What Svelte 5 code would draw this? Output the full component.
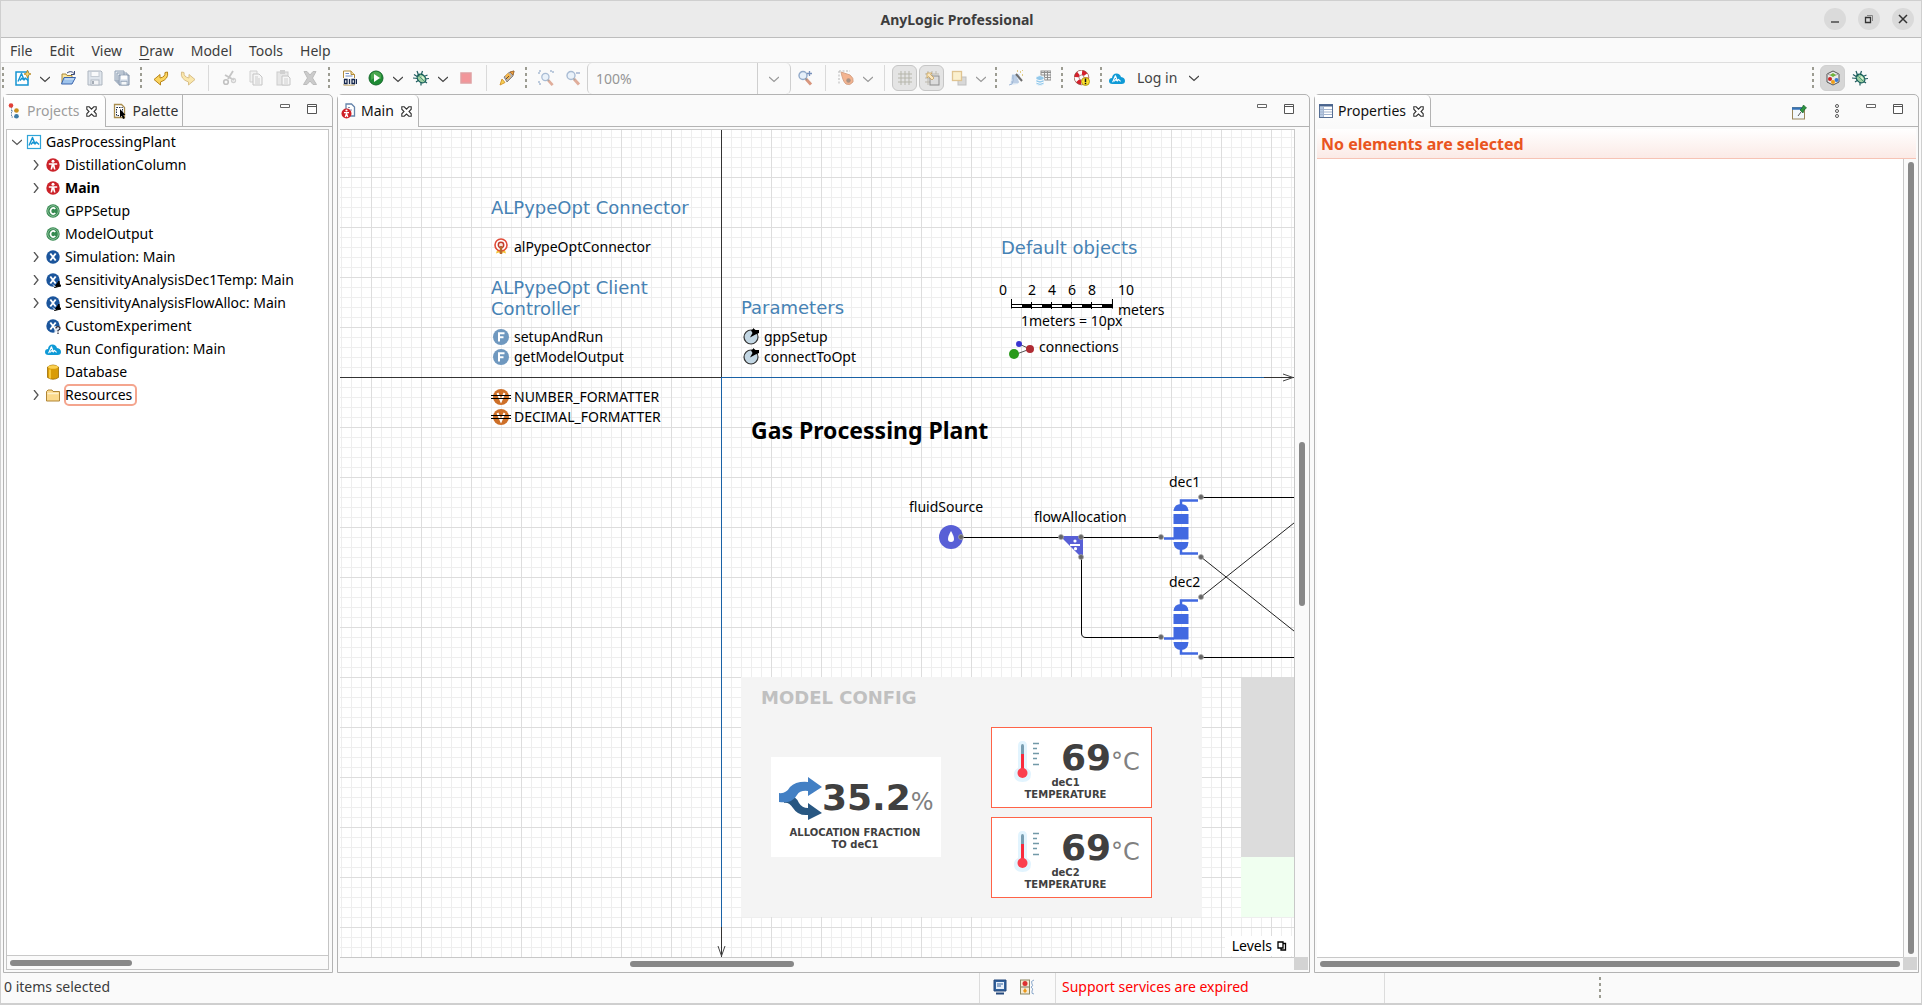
<script>
  const menus = ['File', 'Edit', 'View', 'Draw', 'Model', 'Tools', 'Help'];

  const toolbar = [
    ['dots'], ['btn', 'new', 'New'], ['drop', 'New options'], ['btn', 'open', 'Open'],
    ['btn', 'save', 'Save', 'off'], ['btn', 'saveall', 'Save all', 'soft'],
    ['dots'], ['btn', 'undo', 'Undo'], ['btn', 'redo', 'Redo', 'half'],
    ['line'], ['btn', 'cut', 'Cut', 'gray'], ['btn', 'copy', 'Copy', 'gray'],
    ['btn', 'paste', 'Paste', 'gray'], ['btn', 'delete', 'Delete', 'gray'],
    ['dots'], ['btn', 'build', 'Build model'], ['btn', 'run', 'Run'], ['drop', 'Run options'],
    ['btn', 'bug', 'Debug'], ['drop', 'Debug options'], ['btn', 'stop', 'Stop'],
    ['line'], ['btn', 'rocket', 'Export'],
    ['dots'], ['btn', 'zoomfit', 'Zoom to fit', 'half'], ['btn', 'zoomout', 'Zoom out', 'half'],
    ['combo'], ['btn', 'zoomin', 'Zoom in', 'soft'],
    ['line'], ['btn', 'pen', 'Marker', 'half'], ['drop', 'Marker options', 'off'],
    ['line'], ['btn', 'grid', 'Show grid', 'pressed'], ['btn', 'snap', 'Snap to grid', 'pressed'],
    ['btn', 'order', 'Order', 'half'], ['drop', 'Order options', 'off'],
    ['dots'], ['btn', 'wand', 'Wizard', 'soft'], ['btn', 'dbtable', 'Import database', 'soft'],
    ['dots'], ['btn', 'buoy', 'Support'], ['dots']
  ];

  const tree = [
    { level: 0, arrow: 'down', icon: 'model', text: 'GasProcessingPlant' },
    { level: 1, arrow: 'right', icon: 'agent', text: 'DistillationColumn' },
    { level: 1, arrow: 'right', icon: 'agent', text: 'Main', bold: true },
    { level: 1, icon: 'java', text: 'GPPSetup' },
    { level: 1, icon: 'java', text: 'ModelOutput' },
    { level: 1, arrow: 'right', icon: 'exp', text: 'Simulation: Main' },
    { level: 1, arrow: 'right', icon: 'exparrow', text: 'SensitivityAnalysisDec1Temp: Main' },
    { level: 1, arrow: 'right', icon: 'exparrow', text: 'SensitivityAnalysisFlowAlloc: Main' },
    { level: 1, icon: 'expq', text: 'CustomExperiment' },
    { level: 1, icon: 'cloud', text: 'Run Configuration: Main' },
    { level: 1, icon: 'database', text: 'Database' },
    { level: 1, arrow: 'right', icon: 'folder', text: 'Resources', focused: true }
  ];

  // Diagram coordinates are measured from the model's origin, where the two axes cross.
  const labels = [
    { x: -230, y: -180, kind: 'head', text: 'ALPypeOpt Connector' },
    { x: -230, y: -100, kind: 'head', text: 'ALPypeOpt Client' },
    { x: -230, y: -79, kind: 'head', text: 'Controller' },
    { x: 20, y: -80, kind: 'head', text: 'Parameters' },
    { x: 280, y: -140, kind: 'head', text: 'Default objects' },
    { x: -207, y: -140, text: 'alPypeOptConnector' },
    { x: -207, y: -50, text: 'setupAndRun' },
    { x: -207, y: -30, text: 'getModelOutput' },
    { x: -207, y: 10, text: 'NUMBER_FORMATTER' },
    { x: -207, y: 30, text: 'DECIMAL_FORMATTER' },
    { x: 43, y: -50, text: 'gppSetup' },
    { x: 43, y: -30, text: 'connectToOpt' },
    { x: 278, y: -97, text: '0' },
    { x: 307, y: -97, text: '2' },
    { x: 327, y: -97, text: '4' },
    { x: 347, y: -97, text: '6' },
    { x: 367, y: -97, text: '8' },
    { x: 397, y: -97, text: '10' },
    { x: 397, y: -77, text: 'meters' },
    { x: 300, y: -66, text: '1meters = 10px' },
    { x: 318, y: -40, text: 'connections' },
    { x: 30, y: 37, kind: 'title', text: 'Gas Processing Plant' },
    { x: 188, y: 120, text: 'fluidSource' },
    { x: 313, y: 130, text: 'flowAllocation' },
    { x: 448, y: 95, text: 'dec1' },
    { x: 448, y: 195, text: 'dec2' }
  ];
  const diagramIcons = [
    { x: -228, y: -139, icon: 'connector' },
    { x: -228, y: -48, icon: 'func' },
    { x: -228, y: -28, icon: 'func' },
    { x: -230, y: 12, icon: 'vari' },
    { x: -230, y: 32, icon: 'vari' },
    { x: 22, y: -49, icon: 'param' },
    { x: 22, y: -29, icon: 'param' }
  ];
  const ports = [[240, 160], [340, 160], [360, 160], [360, 180], [440, 160], [480, 120], [480, 180], [440, 260], [480, 220], [480, 280]];
  const sensors = [{ name: 'deC1', y: 350 }, { name: 'deC2', y: 440 }];
</script>

{#snippet chev(dir)}
  <svg class="chev" width="10" height="10" viewBox="0 0 10 10" aria-hidden="true">
    <path d={dir === 'right' ? 'M3 0 7 5 3 10' : 'M0 3 5 7.500 10 3'} fill="none" stroke="currentColor" stroke-width="1.300" />
  </svg>
{/snippet}

{#snippet logoMark(color)}
  <path d="M3 11.500 6.500 3.500 9 10 6.800 8.300 5 10.500M9 10 10.300 8 13 10.500" fill="none" stroke={color} stroke-width="1.400" stroke-linejoin="round" />
{/snippet}

{#snippet lens(sign)}
  <circle cx="6" cy="5.500" r="4" fill="#dcebfa" stroke="#5a7fb0" stroke-width="1.400" />
  <path d="M9 9 14 14.500" stroke="#c8623c" stroke-width="3" />
  <path d="M8.500 8.500 10 10" stroke="#555" stroke-width="1.500" />
  {#if sign}<path d={sign} stroke="#345a9c" stroke-width="1.300" fill="none" />{/if}
{/snippet}

{#snippet bug()}
  <path d="M4 1 5.500 5M9.500 1 8.500 4M14.500 5 11 6.500M1 4.500 5 7M0 8 5 8.500M16 8.500 12 9M14 13 11 11M8 15.500 8 12M3 12 6 10" stroke="#1e5a5e" stroke-width="1.200" />
  <ellipse cx="8.500" cy="8.500" rx="4.800" ry="3.700" transform="rotate(45 8.500 8.500)" fill="#9fd0a4" stroke="#17605a" stroke-width="1.300" />
  <path d="M4.500 4.500 7 5 5 7Z" fill="#17605a" /><path d="M6.500 6.500 11 11" stroke="#4f9a78" /><path d="M9 6.500 11 9" stroke="#e2f8d8" stroke-width="1.300" />
{/snippet}

{#snippet icon(name)}
  <svg class="icon" width="16" height="16" viewBox="0 0 16 16" aria-hidden="true">
    {#if name === 'new'}
      <rect x="1" y="2" width="12" height="13" fill="#fff" stroke="#1494d2" stroke-width="1.500" />
      {@render logoMark('#1494d2')}
      <path d="M12.500 0 13.500 3 16 4 13.500 5 12.500 8 11.500 5 9 4 11.500 3Z" fill="#f8d770" stroke="#b08420" stroke-width=".8" />
    {:else if name === 'open'}
      <path d="M2 13V4H6L7 5.500H12V7" fill="#fbe7a0" stroke="#a8883a" />
      <path d="M7 3Q11 0 14 3.500M14.500 1V4.500H11" fill="none" stroke="#3a4a78" />
      <path d="M1.500 14 4 7.500H15.500L12 14Z" fill="#9fc4ec" stroke="#3a64ac" />
      <path d="M5 9H14" stroke="#d6e8fa" />
    {:else if name === 'save'}
      <path d="M1 1H14L15 2V15H1Z" fill="#dfe5ec" stroke="#adb5bf" />
      <rect x="4" y="1.500" width="8" height="5" fill="#f9fafb" stroke="#c5ccd4" />
      <rect x="4" y="10" width="8" height="5" fill="#f3f4f6" stroke="#b2bac4" /><path d="M6 11V14" stroke="#8b94a0" stroke-width="1.500" />
    {:else if name === 'saveall'}
      <path d="M1 1H10V11H1ZM3 3H13V13H3Z" fill="#d8e0ea" stroke="#5a7290" />
      <path d="M5 5H15V15H5Z" fill="#b4c4d8" stroke="#3d5678" />
      <rect x="7" y="5.500" width="6" height="4" fill="#fff" /><rect x="7" y="11.500" width="6" height="3.500" fill="#f4f7fa" stroke="#5a7290" stroke-width=".7" />
    {:else if name === 'undo' || name === 'redo'}
      <g transform={name === 'redo' ? 'translate(16 0) scale(-1 1)' : undefined}>
        <path d="M14.500 2Q16 9 7.500 12V15L1 9.500 7 4.500V8Q12.500 7 12 2.500Z" fill="#fbd560" stroke="#b98519" stroke-linejoin="round" />
      </g>
    {:else if name === 'cut'}
      <path d="M12 1 7 9M4 5 13 10" stroke="#aaa" stroke-width="1.800" /><circle cx="5" cy="12" r="2.300" fill="none" stroke="#a4a4a4" stroke-width="1.600" /><circle cx="12.500" cy="10.500" r="2" fill="none" stroke="#bbb" stroke-width="1.300" />
    {:else if name === 'copy'}
      <path d="M2 1H9V12H2Z" fill="#eee" stroke="#bbb" /><path d="M5 4H11L14 7V15H5Z" fill="#f4f4f4" stroke="#aaa" /><path d="M7 7H10M7 9H12M7 11H12M7 13H12" stroke="#b4b4b4" />
    {:else if name === 'paste'}
      <rect x="2" y="2" width="11" height="13" fill="#ddd" stroke="#b5b5b5" /><rect x="5" y="0" width="5" height="4" fill="#bbb" /><path d="M7 6H13L15 8V15H7Z" fill="#f5f5f5" stroke="#aaa" /><path d="M9 9H13M9 11H13M9 13H13" stroke="#bbb" />
    {:else if name === 'delete'}
      <path d="M2 1.500 5 1.500 8 5 11 1.500H14L10.500 8 14.500 14.500H11L8 11 5 14.500H1.500L5.500 8Z" fill="#b3b3b3" stroke="#9c9c9c" />
    {:else if name === 'build'}
      <path d="M2.500 1H10L13.500 4.500V15H2.500Z" fill="#fff" stroke="#b08a3a" /><path d="M10 1V4.500H13.500" fill="#f2dca0" stroke="#b08a3a" />
      <path d="M4.500 3.500H8M4.500 6H11.500" stroke="#6d8ac4" /><path d="M2 8H15.500V14.500H2Z" fill="#fafafa" />
      <path d="M3.500 9.500H6V13.500H3.500ZM8.500 9V14M11 9.500H13.500V13.500H11ZM15.500 9V14" fill="none" stroke="#16284e" stroke-width="1.300" />
    {:else if name === 'run'}
      <circle cx="8" cy="8" r="7" fill="#1e8b34" stroke="#14692a" /><path d="M3 4Q8-1 13 4V9Q8 6 3 10Z" fill="#67bd62" opacity=".6" /><path d="M6 4 12 8 6 12Z" fill="#fff" />
    {:else if name === 'bug'}
      {@render bug()}
    {:else if name === 'stop'}
      <rect x="3" y="3" width="10" height="10" fill="#f2969a" stroke="#dfa0a2" stroke-width="1.500" />
    {:else if name === 'rocket'}
      <path d="M5 7 10 2.500 15 1 14 6 8 12Z" fill="#b5b1ae" stroke="#77706c" stroke-width=".8" /><path d="M11 2 15 1 14 5Z" fill="#f1a13c" stroke="#a3682a" stroke-width=".8" />
      <path d="M6 6 9 3 12 6 9 9.500Z" fill="#f7b84c" /><path d="M3 9 6 12.500 1 15Z" fill="#f8d250" stroke="#d59834" /><path d="M7 9 10 6" stroke="#6b4a28" />
    {:else if name === 'zoomfit'}
      <path d="M1 4V1H4M12 1H15V4M1 11V14H4" fill="none" stroke="#5a7fb0" stroke-width="1.500" stroke-dasharray="2 1" />
      <g transform="translate(2 2) scale(.9)">{@render lens('')}</g>
    {:else if name === 'zoomout'}
      {@render lens('M11 3H15')}
    {:else if name === 'zoomin'}
      {@render lens('M10 3.500H15M12.500 1V6')}
    {:else if name === 'pen'}
      <path d="M1 1H12M1 1V14" stroke="#777" stroke-dasharray="2 1.500" fill="none" />
      <path d="M3 2 12 5Q16 8 15 12 12 16 8 14Q5 12 3 2Z" fill="#ef7028" stroke="#b35019" /><circle cx="10.500" cy="10.500" r="2.200" fill="#5a2c10" />
    {:else if name === 'grid'}
      <path d="M4 1V15M8 1V15M12 1V15M1 4H15M1 8H15M1 12H15" stroke="#b6b6ab" />
    {:else if name === 'snap'}
      <path d="M4 1V15M8 1V15M12 1V4M1 4H15M1 8H6M1 12H6" stroke="#bdb9ae" />
      <rect x="6" y="6" width="9" height="9" fill="#dcdcdc" stroke="#8c8c8c" /><path d="M3 3H8L6.500 4.500 10 8 8 10 4.500 6.500 3 8Z" fill="#fbe6bd" stroke="#c8a25c" stroke-width=".8" />
    {:else if name === 'order'}
      <rect x="7" y="7" width="8" height="8" fill="#b8b8b8" stroke="#888" /><rect x="1.500" y="1.500" width="9" height="9" fill="#fce8a4" stroke="#c8902a" stroke-width="1.300" />
    {:else if name === 'wand'}
      <path d="M4 4H12L10 14 2 15Z" fill="#c8dcf0" /><path d="M4 6H9M4 8H9M5 10H10M3 12H11M1 15Q5 15 5 11V5" stroke="#6f94c4" fill="none" /><path d="M8 4 14 11" stroke="#222" stroke-width="2" /><path d="M9 1H10M12 2H13M14 0H15M14 5H15" stroke="#c8a010" stroke-width="1.500" />
    {:else if name === 'dbtable'}
      <rect x="6" y="1" width="10" height="9" fill="#f0f0f0" stroke="#555" /><path d="M6 2.500H16M6 5H16M6 7.500H16M9.500 1V10M12.500 1V10" stroke="#555" />
      <path d="M1 7Q5 4 9 7V14Q5 17 1 14Z" fill="#5eb0e4" stroke="#fff" stroke-width=".7" /><path d="M1 9.500Q5 12 9 9.500M1 12Q5 14.500 9 12" stroke="#fff" fill="none" />
    {:else if name === 'buoy'}
      <circle cx="7.500" cy="7.500" r="5" fill="none" stroke="#fff" stroke-width="5" /><circle cx="7.500" cy="7.500" r="5" fill="none" stroke="#d5202c" stroke-width="4.500" stroke-dasharray="4 3.850" />
      <circle cx="7.500" cy="7.500" r="7.300" fill="none" stroke="#843" stroke-width=".7" /><circle cx="7.500" cy="7.500" r="2.500" fill="#fafafa" stroke="#844" stroke-width=".6" />
      <circle cx="11.500" cy="11.500" r="4" fill="#fde22c" stroke="#a58a10" stroke-width=".8" /><path d="M11.500 8.500V12.200M11.500 13V14.300" stroke="#111" stroke-width="1.500" />
    {:else if name === 'cloud'}
      <path d="M3.500 14Q0 14 0 11 0 8 3 8 3.500 3.500 7.500 3.500 11 3.500 12 7 16 7.500 16 11 16 14 12.500 14Z" fill="#0f9ad6" /><g transform="translate(1.200 3) scale(.8)">{@render logoMark('#fff')}</g>
    {:else if name === 'persp'}
      <path d="M8 1 14 4V12L8 15 2 12V4Z" fill="#eaeaea" stroke="#555" /><path d="M2 4 8 6 14 4" stroke="#aaa" fill="none" />
      <path d="M8 3 11 5 8 7 5 5Z" fill="#6fb43c" /><circle cx="5" cy="9" r="2" fill="#c22" /><circle cx="11.500" cy="10" r="2" fill="#3c7cd4" /><circle cx="8" cy="12" r="2" fill="#f0a018" />
    {:else if name === 'projects'}
      <path d="M4.500 4V14H11M4.500 8H10" stroke="#68a" stroke-dasharray="1.500 1" fill="none" /><circle cx="4" cy="2.500" r="2.300" fill="#e23f36" /><circle cx="9.500" cy="7.500" r="2.300" fill="#c8901c" /><circle cx="9.500" cy="13.300" r="2.300" fill="#3d7ba6" />
    {:else if name === 'palette'}
      <path d="M2.500 1.500H9.500L12.500 4.500V14.500H2.500Z" fill="#fff" stroke="#a88c4c" stroke-width="1.300" /><rect x="4.500" y="4.500" width="6" height="8" fill="none" stroke="#1e2c48" stroke-dasharray="1.500 1" /><path d="M8 6V14.500L9.800 12.800 11 16 12.800 15.200 11.500 12H13.500Z" fill="#000" />
    {:else if name === 'maintab'}
      <path d="M5 1H10.500L13.500 4V13H5Z" fill="#fff" stroke="#6584ab" stroke-width="1.300" /><path d="M7 4.500H9M7 7H11" stroke="#88a" /><circle cx="5.500" cy="10.500" r="5" fill="#cf2027" /><circle cx="5.500" cy="7.500" r="1.100" fill="#fff" /><path d="M3 9.700H8M5.500 10V11.500M5.300 11 4.300 14M5.700 11 6.700 14" stroke="#fff" stroke-width="1.300" />
    {:else if name === 'props'}
      <rect x="1.500" y="1.500" width="13" height="13" fill="#fff" stroke="#576f94" /><path d="M1 2.500H15" stroke="#49648e" stroke-width="2" /><path d="M2 4H5V14H2Z" fill="#b9cbe4" /><path d="M2 6.500H14M2 9H14M2 11.500H14M5.500 4V14" stroke="#a3b4ce" />
    {:else if name === 'pin'}
      <rect x="1.500" y="3.500" width="12" height="11.500" fill="#f2f8fd" stroke="#98855a" /><path d="M1 4.500H12" stroke="#3573b8" stroke-width="2.500" /><path d="M7 12 10 8" stroke="#555" /><path d="M9 6 12 9 13 6 15.500 4 12.500 1 11 4Z" fill="#2c9440" stroke="#176428" stroke-width=".7" />
    {:else if name === 'model'}
      <rect x="1.500" y="1.500" width="13" height="13" fill="#fff" stroke="#2fa4d8" stroke-width="1.200" />{@render logoMark('#1494d2')}
    {:else if name === 'agent'}
      <circle cx="8" cy="8" r="6.700" fill="#cb2229" /><circle cx="8" cy="4.300" r="1.500" fill="#fff" /><path d="M3.800 7H12.200" stroke="#fff" stroke-width="1.500" /><path d="M6.700 7H9.300L10.500 12.500H9L8 9.500 7 12.500H5.500Z" fill="#fff" />
    {:else if name === 'java'}
      <circle cx="8" cy="8" r="6.700" fill="#358a50" /><circle cx="8" cy="8" r="5.300" fill="none" stroke="#8dbf9b" /><path d="M10.300 6Q8 3.800 6 6.200 4.800 8 6 9.800 8 12.200 10.300 10" fill="none" stroke="#fff" stroke-width="1.700" />
    {:else if name === 'exp' || name === 'exparrow' || name === 'expq'}
      <circle cx="8" cy="8" r="6.700" fill="#1b559c" /><path d="M5.300 4.500 10.700 11.500M10.700 4.500 5.300 11.500" stroke="#fff" stroke-width="1.900" />
      {#if name === 'exparrow'}<path d="M9.500 15.500 14 9 14.500 12 16 14Z" fill="#000" stroke="#000" /><path d="M8 12.500 10.500 15" stroke="#fff" />{/if}
      {#if name === 'expq'}<path d="M9.500 8H16V16H9.500Z" fill="#fff" opacity=".85" /><path d="M11 10.500Q11 8.700 13 8.700 15 8.700 15 10.500 15 11.500 13 12.500V13.600M13 14.500V16" fill="none" stroke="#223" stroke-width="1.200" />{/if}
    {:else if name === 'database'}
      <path d="M2.500 3Q8-1 13.500 3V13.500Q8 17 2.500 13.500Z" fill="#d99c08" stroke="#9c6c04" stroke-width=".8" /><ellipse cx="8" cy="3" rx="5" ry="1.800" fill="#fbd050" /><path d="M5 5.500V14.500" stroke="#f7c83c" stroke-width="2" />
    {:else if name === 'folder'}
      <path d="M1.500 14V4.500L3 3H7L8 4.500H14.500V14Z" fill="#fbd98c" stroke="#b08534" /><path d="M2.500 6.500H13.500" stroke="#fdf0cc" stroke-width="1.500" />
    {:else if name === 'monitor'}
      <path d="M2 1H14V12H2Z" fill="#30619c" stroke="#24487c" /><rect x="4" y="3" width="8" height="7" fill="#e8f0fa" /><path d="M5 5H11M5 7H9" stroke="#30619c" /><path d="M4 14.500H12" stroke="#24487c" stroke-width="2" />
    {:else if name === 'lights'}
      <rect x="1.500" y="1" width="9" height="14" fill="#f4ead2" stroke="#8c8660" /><circle cx="6" cy="4.500" r="2.500" fill="#dc3030" /><path d="M2 8H10" stroke="#776" /><path d="M6 9 8 12 6 14 4 12Z" fill="#ec9818" /><path d="M15 1Q11 2 13 5 15 7 12 8 15 10 13 12 12 15 15 15" stroke="#8aa8cc" fill="none" />
    {/if}
  </svg>
{/snippet}

{#snippet diagramIcon(name)}
  {#if name === 'func'}
    <circle cx="8" cy="8" r="8" fill="#6f98bf" /><path d="M6 12.500V4.300H11.500M6 8.200H10.500" fill="none" stroke="#fff" stroke-width="2" />
  {:else if name === 'vari'}
    <circle cx="10" cy="8" r="8" fill="#cd6f28" /><path d="M6.500 4 10 12 13.500 4" fill="none" stroke="#fff" stroke-width="2" /><path d="M0 6.500H20M0 9.500H20" stroke="#000" />
  {:else if name === 'param'}
    <ellipse cx="8" cy="9" rx="7" ry="7" fill="#c3d7e4" stroke="#333" stroke-width="1.200" /><path d="M7 9.500 9.500 5 8 2.500 10 1V0L12.500 2H16V5L12.500 6.500Z" fill="#000" />
  {:else if name === 'connector'}
    <path d="M5 9 3 15.500 6 14.500 8 16 10 14.500 13 15.500 11 9Z" fill="#f4c53a" /><circle cx="8" cy="7" r="6" fill="#fff" stroke="#e14b38" stroke-width="1.600" /><circle cx="8" cy="7" r="2.700" fill="#fbe4dc" stroke="#c23c2c" stroke-width="1.500" /><path d="M8 8V16" stroke="#b56a30" stroke-width="2.500" />
  {/if}
{/snippet}

{#snippet closeX(label)}
  <button class="close" aria-label={label}>
    <svg width="11" height="11" viewBox="0 0 11 11" aria-hidden="true">
      <path d="M.8.800H3.200L5.500 3.200 7.800.800H10.200V3.200L8 5.500 10.200 7.800V10.200H7.800L5.500 8 3.200 10.200H.8V7.800L3 5.500.8 3.200Z" fill="#fff" stroke="#333" stroke-width="1.100" />
    </svg>
  </button>
{/snippet}

{#snippet winTools()}
  <button class="mini" aria-label="Minimize view"><svg width="10" height="10" viewBox="0 0 10 10"><path d="M.5.500H9.500V3.500H.5Z" fill="#fff" stroke="#666" /></svg></button>
  <button class="mini" aria-label="Maximize view"><svg width="10" height="10" viewBox="0 0 10 10"><path d="M.5.500H9.500V9.500H.5ZM.5 2.500H9.500" fill="#fff" stroke="#555" /></svg></button>
{/snippet}

<div class="window">
  <header class="titlebar">
    <h1>AnyLogic Professional</h1>
    <div class="winbtns">
      <button aria-label="Minimize"><svg width="10" height="10" viewBox="0 0 10 10"><path d="M1 8H9" stroke="#333" stroke-width="1.300" /></svg></button>
      <button aria-label="Restore"><svg width="10" height="10" viewBox="0 0 10 10"><path d="M1.500 3.500H6.500V8.500H1.500Z" fill="none" stroke="#333" stroke-width="1.300" /><path d="M3 1.500H8.500V7" fill="none" stroke="#888" /></svg></button>
      <button aria-label="Close"><svg width="10" height="10" viewBox="0 0 10 10"><path d="M1 1 9 9M9 1 1 9" stroke="#333" stroke-width="1.500" /></svg></button>
    </div>
  </header>

  <nav class="menubar">
    {#each menus as m}
      <button>{#if m === 'Draw'}<u>D</u>raw{:else}{m}{/if}</button>
    {/each}
  </nav>

  <div class="toolbar">
    {#each toolbar as [kind, a, b, c]}
      {#if kind === 'dots'}
        <span class="dots"></span>
      {:else if kind === 'line'}
        <span class="line"></span>
      {:else if kind === 'drop'}
        <button class="drop" class:off={b === 'off'} aria-label={a}>{@render chev('down')}</button>
      {:else if kind === 'combo'}
        <div class="combo">
          <input aria-label="Zoom" value="100%" />
          <button aria-label="Zoom levels">{@render chev('down')}</button>
        </div>
      {:else}
        <button class="tool {c ?? ''}" aria-label={b}>{@render icon(a)}</button>
      {/if}
    {/each}
    <button class="login">{@render icon('cloud')}<span>Log in</span>{@render chev('down')}</button>
    <div class="perspectives">
      <span class="dots"></span>
      <button class="tool pressed dark" aria-label="AnyLogic perspective">{@render icon('persp')}</button>
      <button class="tool" aria-label="Debug perspective">{@render icon('bug')}</button>
    </div>
  </div>

  <main class="work">
    <section class="panel">
      <div class="tabs">
        <div class="tab active dim">{@render icon('projects')}<span>Projects</span>{@render closeX('Close Projects')}</div>
        <div class="tab side">{@render icon('palette')}<span>Palette</span></div>
        <div class="rest">{@render winTools()}</div>
      </div>
      <div class="treebox">
        <ul class="tree">
          {#each tree as t}
            <li class:child={t.level === 1} class:bold={t.bold}>
              <span class="twist">{#if t.arrow}{@render chev(t.arrow)}{/if}</span>
              {@render icon(t.icon)}
              <span class="name" class:focused={t.focused}>{t.text}</span>
            </li>
          {/each}
        </ul>
        <div class="hbar"><span class="thumb"></span></div>
      </div>
    </section>

    <section class="panel">
      <div class="tabs">
        <div class="tab active">{@render icon('maintab')}<span>Main</span>{@render closeX('Close Main')}</div>
        <div class="rest">{@render winTools()}</div>
      </div>
      <div class="scroller editor">
        <div class="canvas">
          <div class="axis horizontal"><span></span>
            <svg width="12" height="9" viewBox="0 0 12 9"><path d="M1 1 11 4.500 1 8" fill="none" stroke="#444" /></svg>
          </div>
          <div class="axis vertical"><span></span>
            <svg width="9" height="12" viewBox="0 0 9 12"><path d="M1 1 4.500 11 8 1" fill="none" stroke="#444" /></svg>
          </div>
          <div class="origin">
            <div class="block config"></div>
            <div class="block plot"></div>
            <div class="block legend"></div>

            <svg class="diagram" width="1" height="1">
              {#each diagramIcons as d}
                <g transform="translate({d.x} {d.y})">{@render diagramIcon(d.icon)}</g>
              {/each}

              <path d="M290.500-78V-68.500M310.500-75V-68M330.500-75V-68M350.500-75V-68M370.500-75V-68M391.500-78V-68.500" stroke="#000" />
              <rect x="290.500" y="-72.500" width="101" height="3" fill="#fff" stroke="#000" />
              <path d="M301-71H311M321-71H331M341-71H351M361-71H371M381-71H391" stroke="#000" stroke-width="4" />

              <path d="M298-33 309-28 293-22" stroke="#555" fill="none" />
              <circle cx="298" cy="-33" r="3" fill="#3a34d0" /><circle cx="309" cy="-28" r="4" fill="#b02c34" /><circle cx="293" cy="-23" r="5" fill="#2a9a1c" />

              <path d="M241 160.500H340M360 160.500H440M360.500 180V256Q360.500 260.500 365 260.500H440M480 120.500H1500M480 280.500H1500" stroke="#000" fill="none" />
              <path d="M480 180 1000 594M480 220 1000-194" stroke="#222" fill="none" />

              <circle cx="230" cy="160" r="12" fill="#585fd6" /><path d="M230 154Q233 159 233 162 233 165 230 165 227 165 227 162 227 159 230 154Z" fill="#fff" />
              <path d="M339 159H362V182Z" fill="#585fd6" /><path d="M349 168H359" stroke="#fff" stroke-width="2" /><circle cx="354" cy="164" r="1.600" fill="#fff" /><circle cx="354.500" cy="171.700" r="1.600" fill="#fff" />

              {#each [0, 100] as dy}
                <g transform="translate(0 {dy})" fill="#4169e1">
                  <path d="M460 128V123.500H477M443 161.500H453M460 172V176.500H477" fill="none" stroke="#4169e1" stroke-width="2.500" />
                  <path d="M452.500 134Q453 127 460 127 467 127 467.500 134Z" />
                  <rect x="452.500" y="137" width="15" height="10" /><rect x="452.500" y="150" width="15" height="12.500" />
                  <path d="M452.500 165H467.500Q467 173 460 173 453 173 452.500 165Z" />
                </g>
              {/each}
              {#each ports as [x, y]}
                <circle cx={x} cy={y} r="2.500" fill="#666" stroke="#aaa" stroke-width=".7" />
              {/each}
            </svg>

            {#each labels as l}
              <span class="label {l.kind ?? ''}" style="left:{l.x}px;top:{l.y}px">{l.text}</span>
            {/each}

            <h2 class="label confighead">MODEL CONFIG</h2>
            <div class="card fraction">
              <div class="value">
                <svg width="43" height="43" viewBox="0 0 43 43" aria-hidden="true">
                  <path d="M7 18Q16 17 20 26 23 31 29 31V26L43 36 29 43V38Q19 39 14 31 10 25 5 26Z" fill="#285782" />
                  <path d="M0 16Q7 17 11 10 17 4 29 5V0L43 10 29 19V14Q21 13 18 18 13 27 0 25Z" fill="#4380c4" />
                </svg>
                <strong>35.2</strong><span>%</span>
              </div>
              <p>ALLOCATION FRACTION<br />TO deC1</p>
            </div>
            {#each sensors as s}
              <div class="card sensor" style="top:{s.y}px">
                <div class="value">
                  <svg width="26" height="43" viewBox="0 0 26 43" aria-hidden="true">
                    <path d="M4 28V6Q4 1 8.500 1 13 1 13 6V28Q17 30 17 34 17 42 8.500 42 0 42 0 34 0 30 4 28Z" fill="#e2f4fe" />
                    <path d="M7 14V6Q7 4 8.500 4 10 4 10 6V14Z" fill="#789db0" /><path d="M7 14H10V30H7Z" fill="#f92a3c" /><circle cx="8.500" cy="33" r="5" fill="#fb3f4e" />
                    <path d="M19 3.500H25M19 8.500H23M19 13.500H25M19 18.500H23M19 24.500H25" stroke="#7299a8" stroke-width="1.400" />
                  </svg>
                  <strong>69</strong><span>°C</span>
                </div>
                <p>{s.name}<br />TEMPERATURE</p>
              </div>
            {/each}
          </div>
          <button class="levels">Levels
            <svg width="10" height="10" viewBox="0 0 10 10" aria-hidden="true"><path d="M1 1H6V7H1ZM6 2.500H8.500V9H4V7" fill="none" stroke="#000" stroke-width="1.300" /></svg>
          </button>
        </div>
        <div class="vbar"><span class="thumb"></span></div>
        <div class="hbar"><span class="thumb"></span></div>
        <span class="corner"></span>
      </div>
    </section>

    <section class="panel">
      <div class="tabs">
        <div class="tab active">{@render icon('props')}<span>Properties</span>{@render closeX('Close Properties')}</div>
        <div class="rest">
          <button class="mini" aria-label="Pin view">{@render icon('pin')}</button>
          <button class="mini kebab" aria-label="View menu"><svg width="6" height="14" viewBox="0 0 6 14"><g fill="#fff" stroke="#555"><circle cx="3" cy="2" r="1.500" /><circle cx="3" cy="7" r="1.500" /><circle cx="3" cy="12" r="1.500" /></g></svg></button>
          {@render winTools()}
        </div>
      </div>
      <h2 class="notice">No elements are selected</h2>
      <div class="scroller props">
        <div class="blank"></div>
        <div class="vbar"><span class="thumb"></span></div>
        <div class="hbar"><span class="thumb"></span></div>
        <span class="corner"></span>
      </div>
    </section>
  </main>

  <footer class="status">
    <span class="selected">0 items selected</span>
    <span class="indicators">{@render icon('monitor')}{@render icon('lights')}</span>
    <span class="support">Support services are expired</span>
    <span class="tail"><span class="dots"></span></span>
  </footer>
</div>

<style>
  :global(body) { margin: 0; }
  .window {
    box-sizing: border-box; display: flex; flex-direction: column; height: 100vh; overflow: hidden;
    background: #fafafa; color: #3d3d3d; font: 14px/20px "Noto Sans", "Open Sans", sans-serif;
    border: 1px solid #cfcfcf; border-width: 1px 1px 2px;
  }
  button { appearance: none; border: 0; padding: 0; margin: 0; background: none; color: inherit; font: inherit; }
  svg { flex: none; display: block; }
  h1, h2, p, ul { margin: 0; padding: 0; }

  .titlebar { display: grid; grid-template-columns: 1fr auto 1fr; align-items: center; height: 36px; background: #ebebeb; border-bottom: 1px solid #bdbdbd; }
  .titlebar h1 { grid-column: 2; padding: 2px 8px 0 0; font-size: 14px; font-weight: 700; }
  .winbtns { display: flex; justify-content: flex-end; gap: 12px; padding-right: 7px; }
  .winbtns button { display: grid; place-items: center; width: 22px; height: 22px; border-radius: 50%; background: #dadada; }

  .menubar { display: flex; box-sizing: border-box; gap: 17px; align-items: center; height: 25px; padding: 2px 0 0 9px; border-bottom: 1px solid #dedede; }
  .menubar u { text-underline-offset: 3px; }

  .toolbar { display: flex; align-items: center; height: 31px; margin-left: -4px; color: #444; }
  .tool { display: grid; place-items: center; flex: none; width: 27px; height: 26px; margin-bottom: 1px; }
  .half { opacity: .5; }
  .soft { opacity: .65; }
  .gray { opacity: .65; }
  .pressed { background: #e4e4e4; border: 1px solid #c6c6c6; border-radius: 6px; box-sizing: border-box; width: 25px; margin: 0 1px 1px; }
  .pressed.dark { background: #d6d6d6; border-color: #d0d0d0; }
  .drop { display: grid; place-items: center; width: 18px; height: 26px; }
  .drop.off { color: #999; }
  .dots { flex: none; width: 12px; height: 24px; margin-bottom: 1px; background: repeating-linear-gradient(#9c9c92 0 3px, transparent 3px 6px) center / 2px 22px no-repeat; }
  .line { flex: none; width: 14px; height: 26px; margin-bottom: 1px; background: linear-gradient(#dadada, #dadada) center / 1px 100% no-repeat; }
  .combo { display: flex; box-sizing: border-box; width: 204px; height: 31px; margin: 0 0 0 1px; border: 1px solid #cfcfcf; border-width: 0 1px; border-radius: 5px; color: #999; }
  .combo input { flex: 1; min-width: 0; padding: 0 8px; border: 0; border-right: 1px solid #cfcfcf; background: none; color: #969696; font: inherit; outline: 0; }
  .combo button { display: grid; place-items: center; width: 32px; }
  .login { display: flex; align-items: center; gap: 12px; margin: 0 0 1px 2px; }
  .perspectives { display: flex; align-items: center; margin-left: auto; padding-right: 48px; }

  .work { flex: 1; min-height: 0; display: grid; grid-template-columns: 330px minmax(0, 1fr) 605px; gap: 4px; padding: 0 2px; }
  .panel { display: flex; flex-direction: column; min-width: 0; min-height: 0; box-sizing: border-box; border: 1px solid #b3b3b3; border-radius: 5px 5px 0 0; padding-bottom: 2px; }
  .tabs { display: flex; height: 32px; margin-bottom: 2px; }
  .tab { display: flex; align-items: center; gap: 4px; padding: 0 6px 0 3px; border-right: 1px solid #b3b3b3; color: #222; }
  .tab.active { background: linear-gradient(#fff, #fafafa); border-radius: 0 5px 0 0; color: #111; }
  .tab.dim { padding-right: 8px; color: #9c9c9c; }
  .tab.side { padding: 0 4px 0 6px; border-bottom: 1px solid #b3b3b3; color: #333; }
  .close { display: grid; place-items: center; margin-left: 3px; }
  .rest { flex: 1; display: flex; justify-content: flex-end; gap: 17px; padding: 9px 15px 0 0; border-bottom: 1px solid #b3b3b3; }
  .mini { height: 10px; display: grid; place-items: start; }
  .kebab { margin-left: 10px; margin-right: 9px; }

  .treebox { flex: 1; display: flex; flex-direction: column; margin: 0 3px 0 2px; border: 1px solid #c4c4c4; background: #fff; color: #000; }
  .tree { flex: 1; list-style: none; white-space: nowrap; }
  .tree li { display: flex; align-items: center; gap: 3px; height: 23px; padding-left: 4px; }
  .tree li.child { padding-left: 23px; }
  .bold { font-weight: 700; }
  .twist { display: grid; place-items: center; flex: none; width: 12px; color: #555; }
  .name { margin: 0 1px; }
  .focused { outline: 2px solid #f4a58e; outline-offset: -1px; border-radius: 4px; padding-right: 4px; }
  .hbar { display: flex; align-items: center; height: 13px; border-top: 1px solid #c8c8c8; background: #fafafa; }
  .thumb { display: block; border-radius: 3px; background: #888; }
  .hbar .thumb { height: 6px; }
  .treebox .thumb { width: 38%; margin-left: 3px; }

  .scroller { flex: 1; min-height: 0; display: grid; grid-template: minmax(0, 1fr) 13px / minmax(0, 1fr) 14px; margin: 0 1px 0 2px; }
  .vbar { border-left: 1px solid #c8c8c8; display: flex; justify-content: center; }
  .vbar .thumb { width: 6px; }
  .scroller .hbar { box-sizing: border-box; }
  .corner { background: #d3d3d3; }
  .editor .vbar .thumb { height: 164px; margin-top: 313px; }
  .editor .hbar .thumb { width: 164px; margin-left: 30.4%; }
  .props .vbar .thumb { margin: 3px 0; }
  .props .hbar .thumb { flex: 1; margin: 0 3px; }
  .blank { background: #fff; }

  .canvas {
    position: relative; overflow: hidden; color: #000; border-top: 1px solid #c8c8c8;
    background:
      linear-gradient(90deg, #ddd 1px, transparent 1px) 31px 0 / 50px 50px,
      linear-gradient(#ddd 1px, transparent 1px) 0 47px / 50px 50px,
      linear-gradient(90deg, #eee 1px, transparent 1px) 1px 0 / 10px 10px,
      linear-gradient(#eee 1px, transparent 1px) 0 7px / 10px 10px, #fff;
  }
  .axis { position: absolute; display: flex; background: #333; }
  .axis span { background: #1a61a5; }
  .axis svg { position: absolute; }
  .horizontal { left: 0; right: 0; top: 247px; height: 1px; }
  .horizontal span { margin-left: 381px; flex: 1; margin-right: 30px; }
  .horizontal svg { right: 0; top: -4px; }
  .vertical { top: 0; bottom: 0; left: 381px; width: 1px; flex-direction: column; }
  .vertical span { margin-top: 247px; flex: 1; margin-bottom: 30px; }
  .vertical svg { bottom: 0; left: -4px; }
  .origin { position: absolute; left: 381px; top: 247px; }
  .diagram { position: absolute; left: 0; top: 0; overflow: visible; }
  .block { position: absolute; }
  .config { left: 20px; top: 300px; width: 461px; height: 240px; background: #f4f4f4; }
  .plot { left: 520px; top: 300px; width: 400px; height: 180px; background: #dcdcdc; }
  .legend { left: 520px; top: 480px; width: 400px; height: 60px; background: #f0fff0; }
  .label { position: absolute; white-space: nowrap; line-height: 20px; }
  .head { font: 18px/21px "DejaVu Sans", sans-serif; color: #4682b4; }
  .title { font-size: 23px; line-height: 32px; font-weight: 700; }
  .confighead { left: 40px; top: 310px; font: bold 18px/21px "DejaVu Sans", sans-serif; color: #c0c0c0; }
  .card { position: absolute; box-sizing: border-box; background: #fff; color: #404040; font: bold 10px/12px "DejaVu Sans", sans-serif; text-align: center; }
  .value { display: flex; align-items: baseline; }
  .value svg { align-self: flex-end; }
  .value strong { font-size: 36px; line-height: 42px; }
  .value span { font-size: 24px; font-weight: 400; color: #808080; }
  .fraction { left: 50px; top: 380px; width: 170px; height: 100px; padding: 20px 0 0 8px; }
  .fraction p { padding: 7px 10px 0 0; }
  .sensor { left: 270px; width: 161px; height: 81px; border: 1px solid #ff6347; padding: 9px 0 0 22px; }
  .sensor strong { margin-left: 21px; }
  .sensor p { padding-right: 34px; }
  .sensor .value { height: 40px; }
  .sensor .value svg { align-self: flex-start; margin-top: 3px; }
  .levels { position: absolute; right: 0; bottom: 1px; display: flex; align-items: center; gap: 5px; padding: 0 7px; background: #fff; }

  .notice { height: 29px; margin: 0 2px; padding-left: 4px; border-bottom: 1px solid #f6c3b5; background: linear-gradient(#fff, #fbeae6); color: #e95420; font: bold 16px/30px "Noto Sans", sans-serif; }

  .status { display: flex; align-items: stretch; height: 30px; line-height: 27px; }
  .selected { width: 975px; padding-left: 3px; border-right: 1px solid #dcdcdc; }
  .indicators { display: flex; align-items: center; gap: 11px; padding: 0 20px 3px 12px; border-right: 1px solid #dcdcdc; }
  .support { box-sizing: border-box; width: 329px; padding-left: 6px; color: #f00; border-right: 1px solid #dcdcdc; }
  .tail { display: flex; align-items: center; padding-left: 209px; }
</style>
